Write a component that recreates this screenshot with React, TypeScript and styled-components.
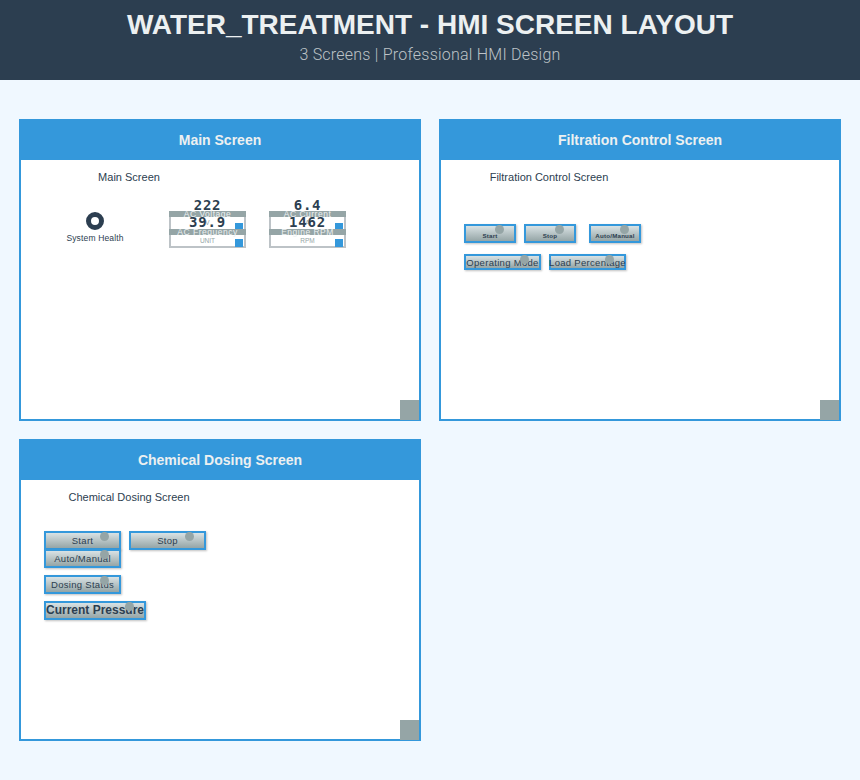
import { createGlobalStyle, styled } from 'styled-components';

const GlobalStyle = createGlobalStyle`
  html, body { margin: 0; padding: 0; }
  body { background: #f0f8ff; font-family: "Liberation Sans", Arial, sans-serif; color: #2c3e50; }
`;

const Page = styled.div`
  width: 860px;
  height: 780px;
  overflow: hidden;
`;

const Header = styled.header`
  height: 80px;
  background: #2c3e50;
  display: flex;
  flex-direction: column;
  align-items: center;
  padding-top: 8px;
  box-sizing: border-box;
`;

const Title = styled.h1`
  margin: 0;
  font-size: 28px;
  line-height: 34px;
  font-weight: 700;
  color: #ecf0f1;
`;

const Subtitle = styled.p`
  margin: 3px 0 0;
  font-family: Roboto, sans-serif;
  font-weight: 300;
  font-size: 16px;
  letter-spacing: 0.23px;
  line-height: 20px;
  color: #bdc3c7;
`;

const Screens = styled.main`
  display: grid;
  grid-template-columns: 402px 402px;
  grid-auto-rows: 302px;
  gap: 18px;
  padding: 39px 19px 0;
`;

const Card = styled.section`
  border: 2px solid #3498db;
  background: #fff;
  box-sizing: border-box;
  display: flex;
  flex-direction: column;
  position: relative;
`;

const CardTitle = styled.h2`
  margin: -2px -2px 0;
  height: 41px;
  flex: none;
  background: #3498db;
  color: #ecf0f1;
  font-size: 14px;
  font-weight: 700;
  line-height: 43px;
  text-align: center;
`;

const Corner = styled.div`
  position: absolute;
  right: 0;
  bottom: -1px;
  width: 19px;
  height: 20px;
  background: #95a5a6;
`;

const ScreenLabel = styled.div`
  width: 216px;
  padding-top: 11px;
  font-size: 11px;
  line-height: 13px;
  text-align: center;
  white-space: nowrap;
`;

/* main screen: health ring plus two gauge blocks */
const MainRow = styled.div`
  display: flex;
  margin-top: 15px;
  padding-left: 44px;
`;

const Health = styled.div`
  width: 60px;
  margin-right: 44px;
  padding-top: 13px;
  display: flex;
  flex-direction: column;
  align-items: center;
  gap: 3px;
`;

const Ring = styled.div`
  width: 18px;
  height: 18px;
  box-sizing: border-box;
  border: 5px solid #2c3e50;
  border-radius: 50%;
`;

const HealthLabel = styled.div`
  font-size: 8.5px;
  line-height: 10px;
  letter-spacing: 0.15px;
  white-space: nowrap;
`;

const GaugeBlock = styled.div`
  width: 77px;
  margin-right: 23px;
`;

const Reading = styled.div`
  height: 12px;
  text-align: center;
  font-family: "DejaVu Sans Mono", monospace;
  font-size: 14px;
  letter-spacing: 0.8px;
  font-weight: 700;
  line-height: 12px;
  white-space: nowrap;
`;

const Gauge = styled.div`
  height: 37px;
  box-sizing: border-box;
  border: 2px solid #bdc3c7;
  border-top: 0;
  display: flex;
  flex-direction: column;
`;

const GaugeTitle = styled.div`
  height: 6px;
  margin: 0 -2px;
  background: #95a5a6;
  color: #ecf0f1;
  font-size: 8.5px;
  line-height: 6px;
  letter-spacing: 0.5px;
  text-align: center;
  white-space: nowrap;
`;

const GaugeRow = styled.div`
  height: 12px;
  position: relative;
  text-align: center;
  font-size: 6.5px;
  line-height: 12px;
  color: #95a5a6;
`;

const GaugeValue = styled.span`
  position: absolute;
  left: 0;
  right: 0;
  top: -1px;
  font-family: "DejaVu Sans Mono", monospace;
  font-size: 14px;
  letter-spacing: 0.8px;
  font-weight: 700;
  line-height: 13px;
  color: #2c3e50;
`;

const GaugeMark = styled.i<{ $size: number }>`
  position: absolute;
  right: 1px;
  bottom: 0;
  width: 8px;
  height: ${p => p.$size}px;
  background: #3498db;
`;

/* control screens */
const ControlArea = styled.div<{ $top: number; $gap: number }>`
  margin-top: ${p => p.$top}px;
  padding-left: 23px;
  display: flex;
  flex-direction: column;
  gap: ${p => p.$gap}px;
`;

const ControlStack = styled.div`
  display: flex;
  flex-direction: column;
  gap: 7px;
`;

const ControlRow = styled.div<{ $overlap?: boolean }>`
  display: flex;
  gap: 8px;
  margin-bottom: ${p => (p.$overlap ? -1 : 0)}px;
`;

const Control = styled.div<{ $w: number; $h: number; $size: number; $bold?: boolean; $spacing?: number; $push?: number; $down?: number }>`
  position: relative;
  width: ${p => p.$w}px;
  height: ${p => p.$h}px;
  margin-left: ${p => p.$push ?? 0}px;
  box-sizing: border-box;
  border: 2px solid #3498db;
  background: linear-gradient(#d9e2e4, #95a5a6);
  box-shadow: 1px 1px 2px rgba(0, 0, 0, 0.25);
  display: flex;
  align-items: center;
  justify-content: center;
  padding-top: ${p => Math.max(p.$down ?? 0, 0)}px;
  padding-bottom: ${p => Math.max(-(p.$down ?? 0), 0)}px;
  white-space: nowrap;
  font-size: ${p => p.$size}px;
  font-weight: ${p => (p.$bold ? 700 : 400)};
  letter-spacing: ${p => p.$spacing ?? 0.3}px;
  color: #2c3e50;
`;

const Dot = styled.span`
  position: absolute;
  right: 10px;
  top: -1px;
  width: 9px;
  height: 9px;
  border-radius: 50%;
  background: #95a5a6;
`;

const gauges = [
  { top: '222', title: 'AC Voltage', unit: 'V', value: '39.9', title2: 'AC Frequency', unit2: 'UNIT' },
  { top: '6.4', title: 'AC Current', unit: 'A', value: '1462', title2: 'Engine RPM', unit2: 'RPM' },
];

const App = () => (
  <Page>
    <GlobalStyle />
    <Header>
      <Title>WATER_TREATMENT - HMI SCREEN LAYOUT</Title>
      <Subtitle>3 Screens | Professional HMI Design</Subtitle>
    </Header>
    <Screens>
      <Card>
        <CardTitle>Main Screen</CardTitle>
        <ScreenLabel>Main Screen</ScreenLabel>
        <MainRow>
          <Health>
            <Ring />
            <HealthLabel>System Health</HealthLabel>
          </Health>
          {gauges.map(g => (
            <GaugeBlock key={g.title}>
              <Reading>{g.top}</Reading>
              <Gauge>
                <GaugeTitle>{g.title}</GaugeTitle>
                <GaugeRow>
                  {g.unit}
                  <GaugeValue>{g.value}</GaugeValue>
                  <GaugeMark $size={6} />
                </GaugeRow>
                <GaugeTitle>{g.title2}</GaugeTitle>
                <GaugeRow>
                  {g.unit2}
                  <GaugeMark $size={8} />
                </GaugeRow>
              </Gauge>
            </GaugeBlock>
          ))}
        </MainRow>
        <Corner />
      </Card>
      <Card>
        <CardTitle>Filtration Control Screen</CardTitle>
        <ScreenLabel>Filtration Control Screen</ScreenLabel>
        <ControlArea $top={40} $gap={11}>
          <ControlRow>
            <Control $w={52} $h={19} $size={6.2} $bold $spacing={0.2} $down={3}>Start<Dot /></Control>
            <Control $w={52} $h={19} $size={6.2} $bold $spacing={0.2} $down={3}>Stop<Dot /></Control>
            <Control $w={52} $h={19} $size={6.2} $bold $spacing={0.2} $down={3} $push={5}>Auto/Manual<Dot /></Control>
          </ControlRow>
          <ControlRow>
            <Control $w={77} $h={16} $size={9.5} $spacing={0.3}>Operating Mode<Dot /></Control>
            <Control $w={77} $h={16} $size={9.5} $spacing={0.3}>Load Percentage<Dot /></Control>
          </ControlRow>
        </ControlArea>
        <Corner />
      </Card>
      <Card>
        <CardTitle>Chemical Dosing Screen</CardTitle>
        <ScreenLabel>Chemical Dosing Screen</ScreenLabel>
        <ControlArea $top={27} $gap={0}>
          <ControlStack>
            <div>
              <ControlRow $overlap>
                <Control $w={77} $h={19} $size={9.5}>Start<Dot /></Control>
                <Control $w={77} $h={19} $size={9.5}>Stop<Dot /></Control>
              </ControlRow>
              <Control $w={77} $h={19} $size={9.5}>Auto/Manual<Dot /></Control>
            </div>
            <Control $w={77} $h={19} $size={9.5}>Dosing Status<Dot /></Control>
            <Control $w={102} $h={19} $size={12} $bold $spacing={0} $down={-2}>Current Pressure<Dot /></Control>
          </ControlStack>
        </ControlArea>
        <Corner />
      </Card>
    </Screens>
  </Page>
);

export default App;
